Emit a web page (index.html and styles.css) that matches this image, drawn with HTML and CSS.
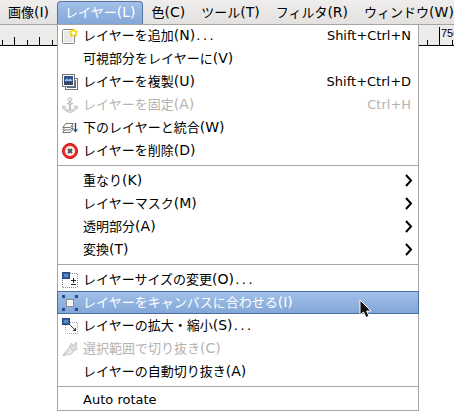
FILE: index.html
```
<!DOCTYPE html>
<html lang="ja">
<head>
    <meta charset="UTF-8">
    <meta name="viewport" content="width=device-width, initial-scale=1.0">
    <title>レイヤー</title>
    <link rel="stylesheet" href="styles.css">
</head>
<body>
    <nav class="menubar">
        <button class="menu-title">画像<span class="key">(I)</span></button>
        <div class="menu-holder">
            <button class="menu-title open" aria-expanded="true">レイヤー<span class="key">(L)</span></button>
            <ul class="menu">
                <li><button class="item">
                    <svg class="icon" viewBox="0 0 16 16"><rect x="0.5" y="1.5" width="12" height="14" rx="1" fill="#e9eae7" stroke="#85877f"/><rect x="1.5" y="2.5" width="10" height="12" fill="none" stroke="#fff"/><path d="M11.500 1l1.300 2.100 2.600.5-1.700 1.900.3 2.600-2.500-1-2.500 1 .3-2.600-1.700-1.900 2.600-.5z" fill="#fffde8" stroke="#edd400" stroke-width="1.400" stroke-linejoin="round"/></svg>
                    <span class="label">レイヤーを追加<span class="key">(N)</span><span class="dots">...</span></span>
                    <kbd>Shift+Ctrl+N</kbd>
                </button></li>
                <li><button class="item">
                    <span class="icon"></span>
                    <span class="label">可視部分をレイヤーに<span class="key">(V)</span></span>
                </button></li>
                <li><button class="item">
                    <svg class="icon" viewBox="0 0 16 16"><rect x="3.500" y="4.500" width="12" height="11" fill="#fff" stroke="#72746d"/><rect x="5" y="6" width="9" height="8" fill="#4a6a98"/><rect x="0.500" y="0.500" width="12" height="12" fill="#fff" stroke="#72746d"/><rect x="2" y="2" width="9" height="9" fill="#2f5590"/><path d="M3 6l2-1.500L6.500 6 8 4.500 10 6v1H3z" fill="#a9c2e2"/><path d="M2 8h9v3H2z" fill="#34455f"/></svg>
                    <span class="label">レイヤーを複製<span class="key">(U)</span></span>
                    <kbd>Shift+Ctrl+D</kbd>
                </button></li>
                <li><button class="item" disabled>
                    <svg class="icon" viewBox="0 0 16 16" fill="none" stroke="#c0c0be"><circle cx="8" cy="2.500" r="1.800" fill="#f2f2f2"/><path d="M7.500 4.500V6H5.500v1h2v6h1V7h2V6h-2V4.500z" fill="#e4e4e2"/><path d="M.8 12V9l3 .3-.8 1c.6 2 2.200 2.700 5 2.900 2.800-.2 4.400-.9 5-2.900l-.8-1 3-.3v3l-.9-.5c-1.300 2.300-3.300 3.300-6.300 3.900-3-.6-5-1.600-6.300-3.900z" fill="#e8e8e6"/></svg>
                    <span class="label">レイヤーを固定<span class="key">(A)</span></span>
                    <kbd>Ctrl+H</kbd>
                </button></li>
                <li><button class="item">
                    <svg class="icon" viewBox="0 0 16 16"><g fill="#fff" stroke="#777971"><path d="M.8 12.500l3-4h7.500l-3 4z"/><path d="M.8 10l3-4h7.500l-3 4z"/><path d="M.8 7.500l3-4h7.500l-3 4z"/></g><path d="M13.500 3v8" stroke="#204a87" stroke-width="1.400"/><path d="M11 9.500h5l-2.500 3z" fill="#204a87"/></svg>
                    <span class="label">下のレイヤーと統合<span class="key">(W)</span></span>
                </button></li>
                <li><button class="item">
                    <svg class="icon" viewBox="0 0 16 16"><circle cx="8" cy="8" r="7.500" fill="#ef2929" stroke="#d00c0c"/><circle cx="8" cy="8" r="5" fill="#f4f4f2"/><path d="M6 6l4 4M10 6l-4 4" stroke="#555753" stroke-width="2.200"/></svg>
                    <span class="label">レイヤーを削除<span class="key">(D)</span></span>
                </button></li>
                <li class="separator" role="separator"></li>
                <li><button class="item">
                    <span class="icon"></span>
                    <span class="label">重なり<span class="key">(K)</span></span>
                    <svg class="arrow" viewBox="0 0 8 13"><path d="M1 1l5 5.500L1 12"/></svg>
                </button></li>
                <li><button class="item">
                    <span class="icon"></span>
                    <span class="label">レイヤーマスク<span class="key">(M)</span></span>
                    <svg class="arrow" viewBox="0 0 8 13"><path d="M1 1l5 5.500L1 12"/></svg>
                </button></li>
                <li><button class="item">
                    <span class="icon"></span>
                    <span class="label">透明部分<span class="key">(A)</span></span>
                    <svg class="arrow" viewBox="0 0 8 13"><path d="M1 1l5 5.500L1 12"/></svg>
                </button></li>
                <li><button class="item">
                    <span class="icon"></span>
                    <span class="label">変換<span class="key">(T)</span></span>
                    <svg class="arrow" viewBox="0 0 8 13"><path d="M1 1l5 5.500L1 12"/></svg>
                </button></li>
                <li class="separator" role="separator"></li>
                <li><button class="item">
                    <svg class="icon" viewBox="0 0 16 16"><path d="M8 1.500h7.500V15M.5 8v7.500H15" fill="none" stroke="#888" stroke-dasharray="1 1"/><rect x="0.500" y="0.500" width="7" height="6" fill="#3465a4" stroke="#204a87"/><rect x="2" y="2" width="4" height="3" fill="#5b86bf"/><path d="M11.500 6v5M9 8.500h5M9 12.500h5" stroke="#222"/></svg>
                    <span class="label">レイヤーサイズの変更<span class="key">(O)</span><span class="dots">...</span></span>
                </button></li>
                <li><button class="item selected">
                    <svg class="icon" viewBox="0 0 16 16"><rect x="4.500" y="4.500" width="7" height="7" fill="#f4f4f2" stroke="#888a85"/><rect x="5.500" y="5.500" width="5" height="5" fill="none" stroke="#fff"/><path d="M0 0h3.500L2.500 1 3.500 2 2 3.500 1 2.500 0 3.500zM16 0h-3.500l1 1-1 1L14 3.500l1-1 1 1zM0 16h3.500l-1-1 1-1L2 12.500l-1 1-1-1zM16 16h-3.500l1-1-1-1 1.500-1.500 1 1 1-1z" fill="#204a87"/></svg>
                    <span class="label">レイヤーをキャンバスに合わせる<span class="key">(I)</span></span>
                </button></li>
                <li><button class="item">
                    <svg class="icon" viewBox="0 0 16 16"><path d="M8 4.500h7.500v11H3.500V7" fill="none" stroke="#aaa" stroke-dasharray="1 1"/><rect x="0.500" y="0.500" width="7" height="6" fill="#3465a4" stroke="#204a87"/><rect x="2" y="2" width="4" height="3" fill="#5b86bf"/><path d="M7.500 6.500l5 5" stroke="#404840"/><path d="M14 13V9.500L10.500 13z" fill="#303830"/></svg>
                    <span class="label">レイヤーの拡大・縮小<span class="key">(S)</span><span class="dots">...</span></span>
                </button></li>
                <li><button class="item" disabled>
                    <svg class="icon" viewBox="0 0 16 16" fill="#eee" stroke="#c6c6c4"><path d="M.8 14.500L7.500 6l4 4-2 3z"/><path d="M1 14.500l7-5.500" fill="none"/><path d="M7.500 6l2-4 1.500 2.500L14.500 1l-.5 6 1.500 1-4 2z" fill="#dededc"/></svg>
                    <span class="label">選択範囲で切り抜き<span class="key">(C)</span></span>
                </button></li>
                <li><button class="item">
                    <span class="icon"></span>
                    <span class="label">レイヤーの自動切り抜き<span class="key">(A)</span></span>
                </button></li>
                <li class="separator" role="separator"></li>
                <li><button class="item short">
                    <span class="icon"></span>
                    <span class="label">Auto rotate</span>
                </button></li>
            </ul>
            <svg class="pointer" viewBox="0 0 14 20"><path d="M1 1v15l3.500-3 2.500 5.500 3-1.300L7.700 12H12z" fill="#111" stroke="#fff"/></svg>
        </div>
        <button class="menu-title">色<span class="key">(C)</span></button>
        <button class="menu-title">ツール<span class="key">(T)</span></button>
        <button class="menu-title">フィルタ<span class="key">(R)</span></button>
        <button class="menu-title">ウィンドウ<span class="key">(W)</span></button>
    </nav>
    <div class="ruler">
        <svg width="100%" height="20">
            <path d="M2.500 15v5M14.500 12v8M27.500 15v5M39.500 12v8M52.500 15v5M427.500 15v5M439.500 2v18M452.500 15v5" stroke="#000"/>
            <text x="441" y="12">750</text>
        </svg>
    </div>
</body>
</html>
```
FILE: styles.css
```
* {
    box-sizing: border-box;
}
body {
    margin: 0;
    min-height: 100vh;
    background-color: #fff;
    color: #000;
    font-family: "DejaVu Sans", "Noto Sans CJK JP", sans-serif;
    font-size: 13px;
}
button {
    margin: 0;
    border: 0;
    background: none;
    color: inherit;
    font: inherit;
    white-space: nowrap;
}
.menubar {
    display: flex;
    height: 25px;
    padding-top: 1px;
    background: linear-gradient(#efeeed, #e3e2e0);
    border-bottom: 1px solid #a6a5a3;
}
.menu-title {
    height: 23px;
    padding: 0 8px;
    line-height: 22px;
}
.menu-title:last-child {
    padding-right: 0;
}
.menu-title.open {
    border: 1px solid #54749f;
    border-bottom: 0;
    border-radius: 4px 4px 0 0;
    padding: 0 7px;
    background: linear-gradient(#a2c0e8, #83a7d8);
    color: #fff;
}
.key {
    font-size: 14px;
    line-height: 1;
}
.dots {
    font-family: "DejaVu Sans Mono", monospace;
    font-size: 11px;
    line-height: 1;
}
.menu-holder {
    position: relative;
}

/* drop-down */
.menu {
    position: absolute;
    top: 23px;
    left: 0;
    z-index: 1;
    min-width: 362px;
    margin: 0;
    padding: 0;
    list-style: none;
    background-color: #fff;
    border: 1px solid #a6a5a3;
    border-top: 0;
    box-shadow: inset 0 1px #a6a5a3;
}
.item {
    display: flex;
    align-items: center;
    gap: 5px;
    width: 100%;
    height: 23px;
    padding: 0 5px 0 4px;
    line-height: 22px;
    text-align: left;
}
.item:disabled {
    color: #b5b3b0;
}
.item.short {
    height: 20px;
}
.item.selected {
    width: calc(100% + 2px);
    margin: 0 -1px;
    border: 1px solid #4a6d9f;
    background: linear-gradient(#a2c0e8, #83a7d8);
    color: #fff;
}
.icon {
    flex: none;
    width: 16px;
    height: 16px;
}
.label {
    flex: 1;
}
.item kbd {
    padding-right: 2px;
    font-family: inherit;
}
.arrow {
    width: 8px;
    height: 13px;
    fill: none;
    stroke: #000;
    stroke-width: 2;
}
.separator {
    height: 7px;
    padding: 3px 0;
    background: #a6a5a3 content-box;
}
.pointer {
    position: absolute;
    top: 298px;
    left: 302px;
    z-index: 2;
    width: 14px;
    height: 20px;
}

/* ruler */
.ruler {
    height: 21px;
    background-color: #edeceb;
    border-bottom: 1px solid #000;
}
.ruler svg {
    display: block;
}
.ruler text {
    font-family: "Liberation Sans", sans-serif;
    font-size: 11px;
}
```
